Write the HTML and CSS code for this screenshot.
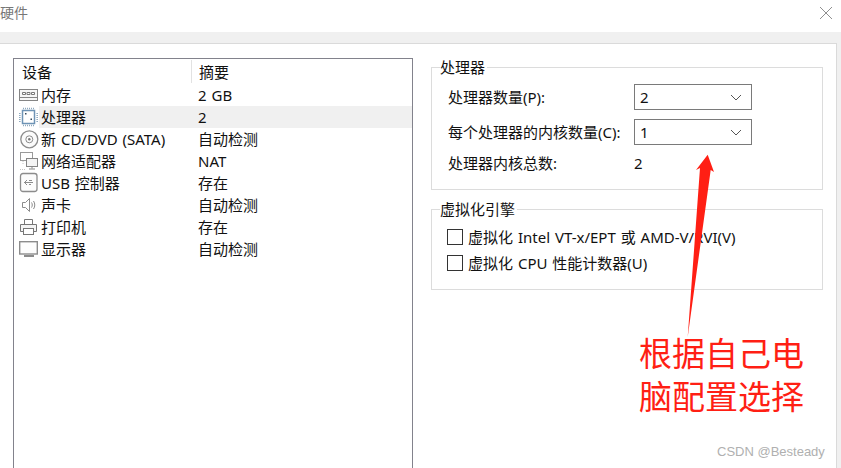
FILE: index.html
```html
<!DOCTYPE html>
<html lang="zh-CN">
<head>
<meta charset="utf-8">
<title>硬件</title>
<link rel="stylesheet" href="styles.css">
</head>
<body>
<div class="titlebar">
  <span class="title">硬件</span>
  <svg class="close" width="14" height="14" viewBox="0 0 14 14"><path d="M1 1 13 13M13 1 1 13" stroke="#8f8f8f" stroke-width="1" fill="none"/></svg>
</div>
<div class="band"></div>
<main class="panel">
  <section class="list">
    <div class="list-head"><span class="head-name">设备</span><span class="head-sum">摘要</span></div>
    <div class="row">
      <svg class="icon" width="20" height="22" viewBox="0 0 20 22"><rect x="0.500" y="5.500" width="18" height="11" fill="#f6f6f6" stroke="#858585"/><path d="M1 13.500h17" stroke="#858585"/><path d="M3.500 8.500h3v2h-3zM8 8.500h3v2H8zM12.500 8.500h3v2h-3z" fill="#fff" stroke="#777"/></svg>
      <div class="cells"><span class="name">内存</span><span>2 GB</span></div>
    </div>
    <div class="row">
      <svg class="icon" width="20" height="22" viewBox="0 0 20 22"><rect x="3.500" y="4.500" width="12" height="13" fill="#fff" stroke="#6d93b5" stroke-width="1.500"/><path d="M4 2.500h11M4 19.500h11M0.800 7v9M18.200 7v9" stroke="#8fa9bf" stroke-width="1.600" stroke-dasharray="1 1"/><path d="M6 7h1.500v1.500H6zM11.500 12.500H13V14h-1.500z" fill="#33475a"/></svg>
      <div class="cells selected"><span class="name">处理器</span><span>2</span></div>
    </div>
    <div class="row">
      <svg class="icon" width="20" height="22" viewBox="0 0 20 22"><circle cx="10.300" cy="11.300" r="8.500" fill="#fbfbfb" stroke="#8c8c8c" stroke-width="1.300"/><circle cx="10.300" cy="11.300" r="3.500" fill="none" stroke="#8c8c8c"/><circle cx="10.300" cy="11.300" r="1.200" fill="#777"/></svg>
      <div class="cells"><span class="name">新 CD/DVD (SATA)</span><span>自动检测</span></div>
    </div>
    <div class="row">
      <svg class="icon" width="20" height="22" viewBox="0 0 20 22"><rect x="1.500" y="2.500" width="12" height="8" fill="#fff" stroke="#9a9a9a"/><rect x="7.500" y="8.500" width="11" height="8" fill="#f4f4f4" stroke="#858585"/><path d="M13 16.500v2M10 19h6" stroke="#858585"/><path d="M4 11v4M1 19.500h6" stroke="#c4c4c4" stroke-dasharray="1 1"/></svg>
      <div class="cells"><span class="name">网络适配器</span><span>NAT</span></div>
    </div>
    <div class="row">
      <svg class="icon" width="20" height="22" viewBox="0 0 20 22"><rect x="1.500" y="1.500" width="16.500" height="18" rx="2.500" fill="#fcfcfc" stroke="#8c8c8c" stroke-width="1.300"/><path d="M5 10.500h9M8 8 5.500 10.500 8 13M10 8.500h3M10 12.500h2" stroke="#8c8c8c" fill="none"/></svg>
      <div class="cells"><span class="name">USB 控制器</span><span>存在</span></div>
    </div>
    <div class="row">
      <svg class="icon" width="20" height="22" viewBox="0 0 20 22"><path d="M3.500 8.500h3l4-4v13l-4-4h-3z" fill="#fff" stroke="#8c8c8c"/><path d="M12.500 8.500c1 1.500 1 3.500 0 5M14.500 7c1.700 2.500 1.700 5.500 0 8" stroke="#8c8c8c" fill="none"/></svg>
      <div class="cells"><span class="name">声卡</span><span>自动检测</span></div>
    </div>
    <div class="row">
      <svg class="icon" width="20" height="22" viewBox="0 0 20 22"><path d="M5.500 8V3.500h8V8" fill="#fff" stroke="#777"/><path d="M4.500 15.500h-3v-7h16v7h-3" fill="#f4f4f4" stroke="#777"/><rect x="4.500" y="12.500" width="10" height="6" fill="#fff" stroke="#777"/></svg>
      <div class="cells"><span class="name">打印机</span><span>存在</span></div>
    </div>
    <div class="row">
      <svg class="icon" width="20" height="22" viewBox="0 0 20 22"><rect x="0.700" y="3.700" width="17.600" height="12.300" fill="#fdfdfd" stroke="#8c8c8c" stroke-width="1.400"/><path d="M5 18h10" stroke="#8c8c8c" stroke-width="2"/></svg>
      <div class="cells"><span class="name">显示器</span><span>自动检测</span></div>
    </div>
  </section>
  <div class="settings">
    <fieldset class="group group-cpu">
      <legend>处理器</legend>
      <div class="form">
        <span>处理器数量(P):</span>
        <div class="combo"><span>2</span><svg width="12" height="7" viewBox="0 0 12 7"><path d="M1 1l5 5 5-5" fill="none" stroke="#555"/></svg></div>
        <span>每个处理器的内核数量(C):</span>
        <div class="combo"><span>1</span><svg width="12" height="7" viewBox="0 0 12 7"><path d="M1 1l5 5 5-5" fill="none" stroke="#555"/></svg></div>
        <span>处理器内核总数:</span>
        <span>2</span>
      </div>
    </fieldset>
    <fieldset class="group group-virt">
      <legend>虚拟化引擎</legend>
      <div class="check"><span class="box"></span><span>虚拟化 Intel VT-x/EPT 或 AMD-V/RVI(V)</span></div>
      <div class="check"><span class="box"></span><span>虚拟化 CPU 性能计数器(U)</span></div>
    </fieldset>
  </div>
</main>
<svg class="arrow" width="30" height="185" viewBox="0 0 30 185"><polygon points="22.700,0.700 29,18 25.700,16 2.700,183 15,14 11,16" fill="#ff1f14"/></svg>
<p class="note">根据自己电脑配置选择</p>
<span class="mark">CSDN @Besteady</span>
</body>
</html>
```
FILE: styles.css
```css
html, body {
  margin: 0;
  height: 468px;
  overflow: hidden;
}
body {
  position: relative;
  background: #fff;
  color: #111;
  font: 15px/20px "Noto Sans", "Noto Sans CJK SC", sans-serif;
  word-spacing: 1px;
}
.titlebar {
  height: 32px;
  padding-top: 3px;
  box-sizing: border-box;
  display: flex;
  justify-content: space-between;
  color: #777;
}
.title {
  font-size: 14px;
}
.close {
  margin: 3px 8px 0 0;
}
.band {
  height: 11px;
  background: #f0f0f0;
}
.panel {
  box-sizing: border-box;
  width: 837px;
  height: 425px;
  padding: 13px 0 0 13px;
  border-top: 1px solid #dadada;
  border-right: 1px solid #dadada;
  display: grid;
  grid-template-columns: 400px 392px;
  column-gap: 18px;
  align-items: start;
}
body::after {
  content: "";
  position: absolute;
  right: 0;
  top: 43px;
  bottom: 0;
  width: 4px;
  background: #f0f0f0;
}
.list {
  box-sizing: border-box;
  height: 420px;
  margin-top: 1px;
  border: 1px solid #82828c;
}
.list-head {
  height: 25px;
  display: flex;
  align-items: center;
  padding-left: 8px;
}
.head-name {
  width: 169px;
  border-right: 1px solid #e2e2e2;
  height: 23px;
  line-height: 25px;
}
.head-sum {
  padding-left: 7px;
}
.row {
  height: 22px;
  display: flex;
  padding-left: 5px;
}
.icon {
  flex: none;
}
.cells {
  flex: 1;
  display: flex;
  align-items: center;
  padding-left: 2px;
}
.selected {
  background: #f0f0f0;
}
.name {
  width: 157px;
}
.group {
  margin: 0;
  border: 1px solid #dcdcdc;
  box-sizing: border-box;
  min-width: 0;
}
.group legend {
  padding: 0 2px 0 0;
  margin-left: -8px;
}
.group-cpu {
  height: 133px;
  padding: 7px 16px 0;
}
.group-virt {
  height: 91px;
  margin-top: 9px;
  padding: 10px 15px 0;
}
.group-virt legend {
  margin-left: -7px;
}
.form {
  display: grid;
  grid-template-columns: 186px 118px;
  grid-template-rows: 26px 26px 18px;
  row-gap: 9px;
  align-items: center;
}
.combo {
  box-sizing: border-box;
  height: 26px;
  border: 1px solid #7a7a7a;
  padding: 0 9px 0 5px;
  display: flex;
  align-items: center;
  justify-content: space-between;
}
.check {
  display: flex;
  align-items: center;
  gap: 5px;
  height: 16px;
  margin-bottom: 10px;
}
.box {
  box-sizing: border-box;
  width: 16px;
  height: 16px;
  border: 1px solid #333;
}
.arrow {
  position: absolute;
  left: 685px;
  top: 154px;
}
.note {
  position: absolute;
  left: 639px;
  top: 331px;
  width: 170px;
  margin: 0;
  color: #ff1f14;
  font: 33px/43px "Noto Sans CJK SC", sans-serif;
}
.mark {
  position: absolute;
  left: 717px;
  top: 442px;
  color: #b0b0b0;
  word-spacing: 0;
  font: 13px/20px "Liberation Sans", sans-serif;
}
```
